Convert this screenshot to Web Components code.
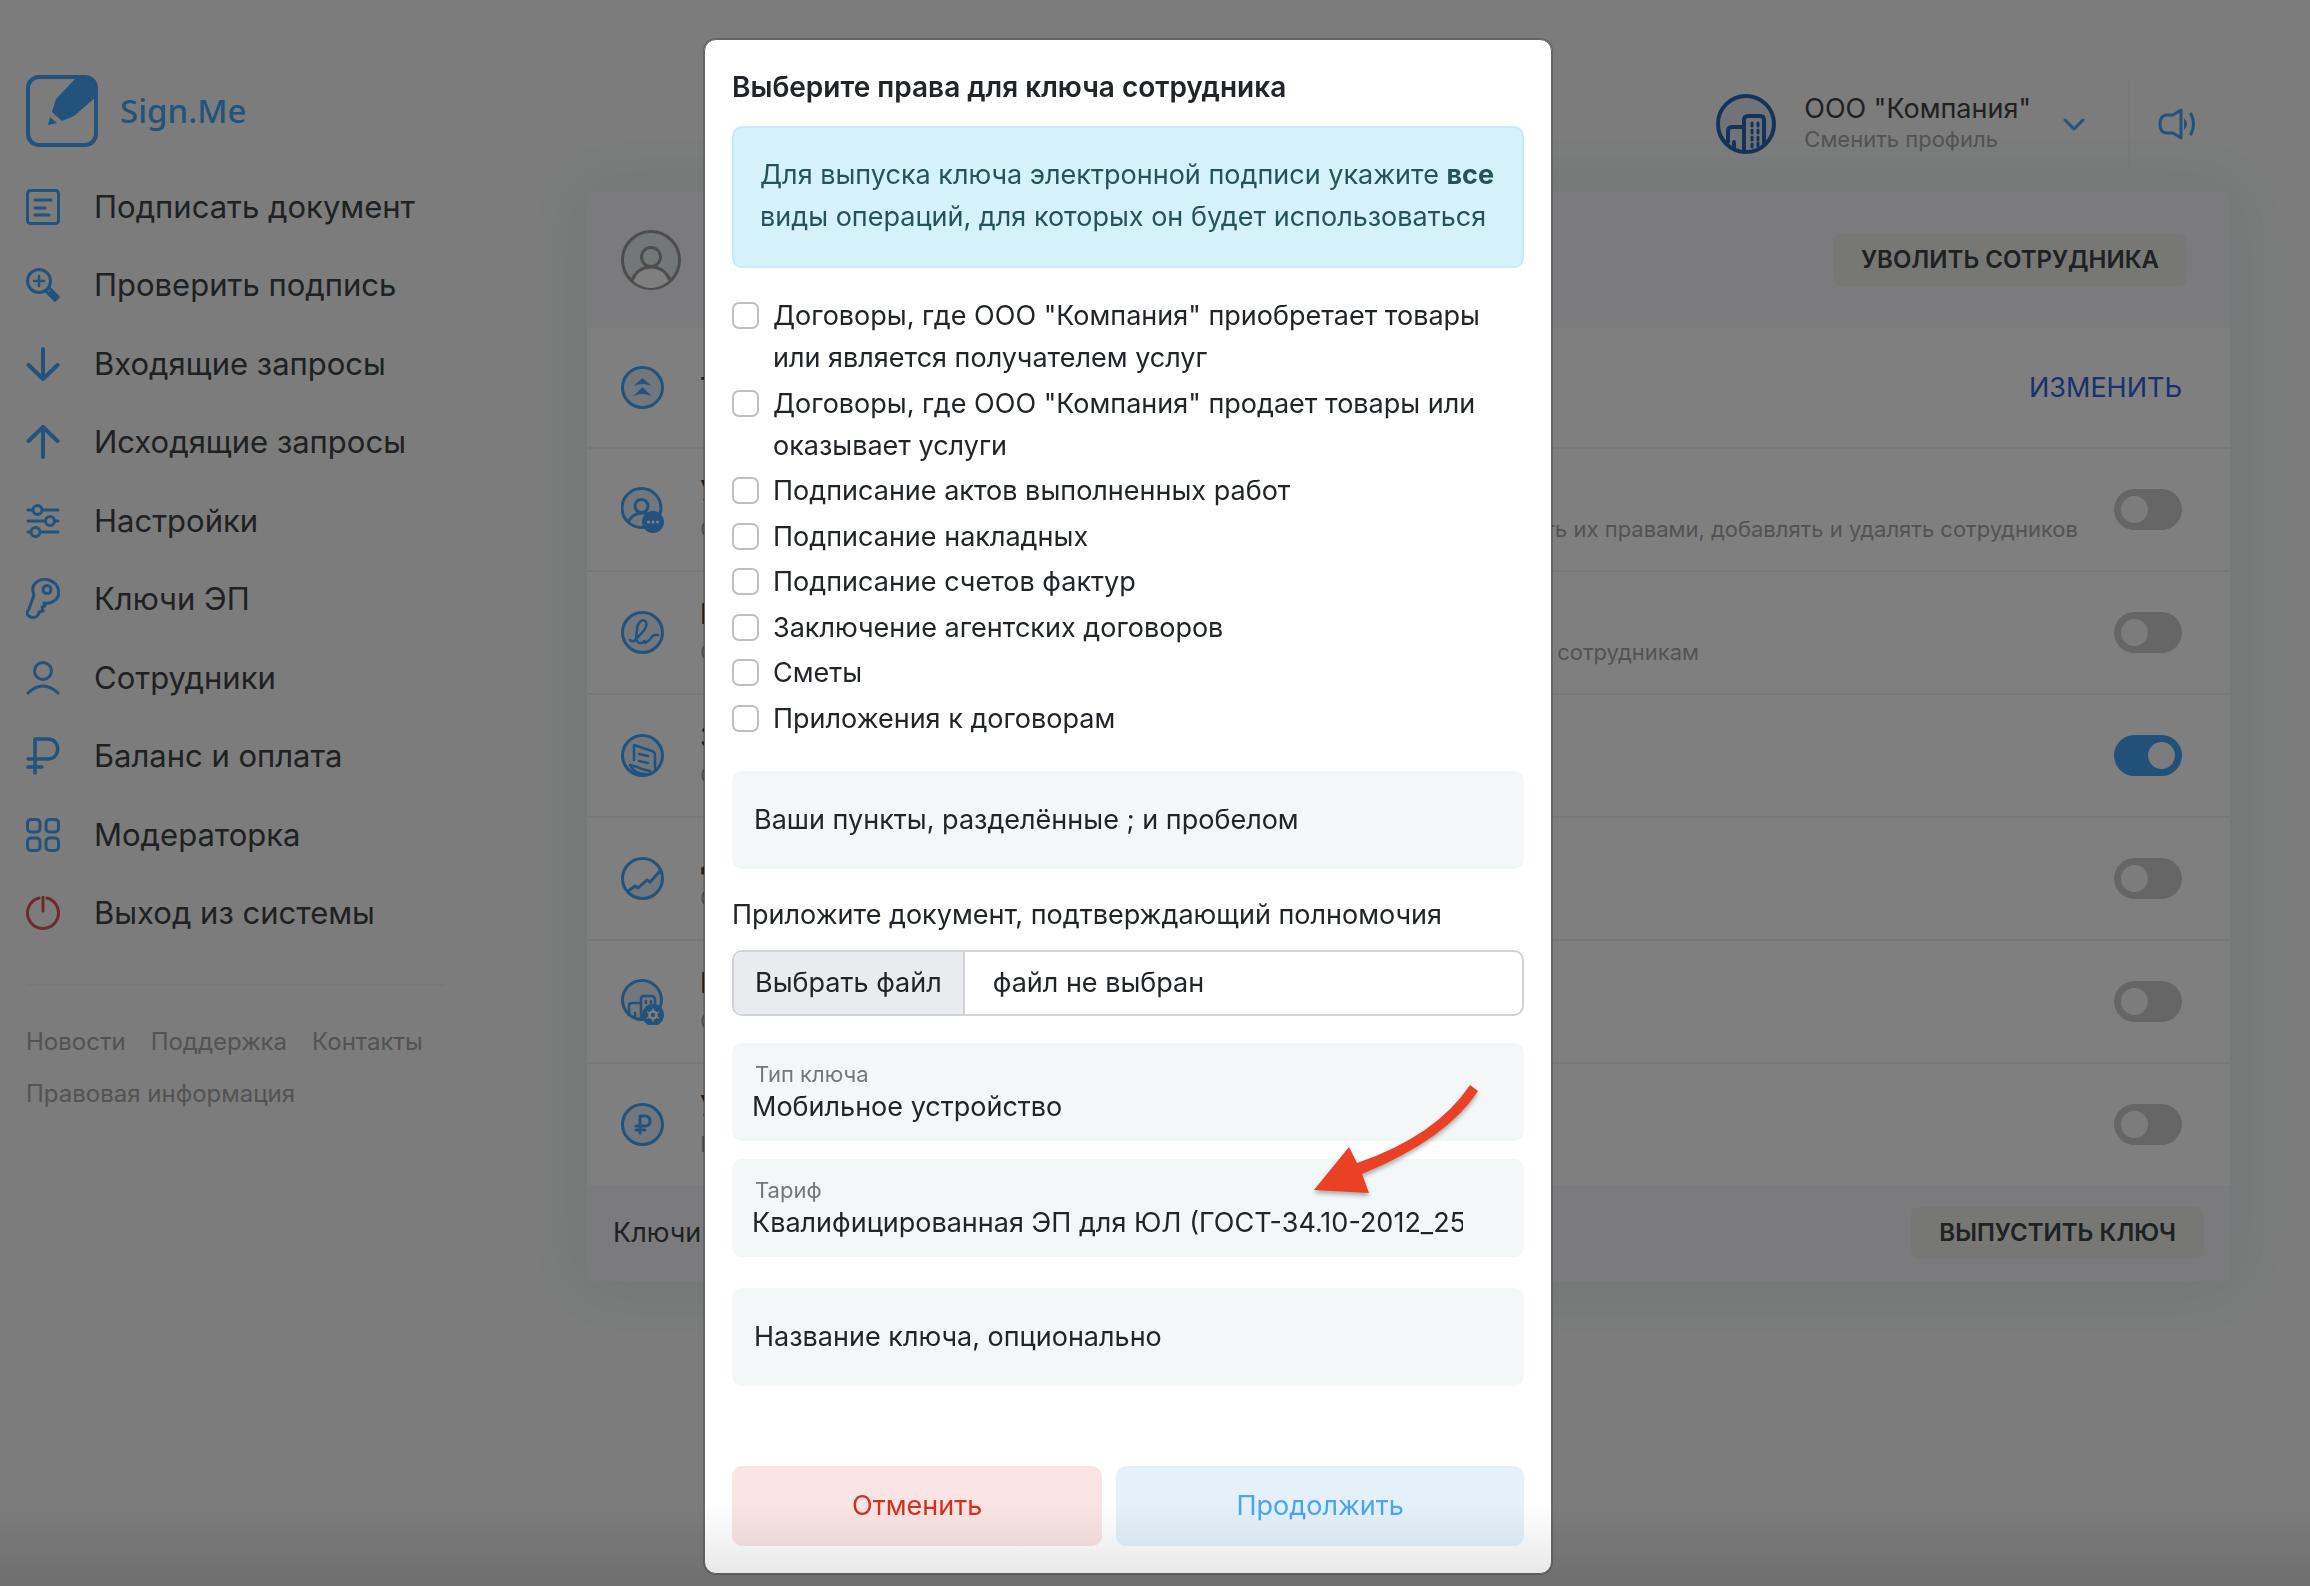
<!DOCTYPE html>
<html lang="ru">
<head>
<meta charset="utf-8">
<meta name="viewport" content="width=device-width, initial-scale=1">
<title>Sign.Me</title>
<style>
  :root {
    --ink: #404244;
    --muted: #a6a6a6;
    --blue: #46a4f8;
    --line: #f0f0f0;
    --title: 28px;
    --text: 27px;
    --small: 24px;
    --tiny: 22px;
    --line-height: 42px;
  }
  html, body { margin: 0; height: 100%; }
  body {
    background: #f6f9f7;
    color: var(--ink);
    font: 400 var(--text)/var(--line-height) Inter, "Liberation Sans", sans-serif;
  }
</style>
</head>
<body>
<app-shell>
  <side-bar slot="side">
    <nav-item icon="doc">Подписать документ</nav-item>
    <nav-item icon="search">Проверить подпись</nav-item>
    <nav-item icon="down">Входящие запросы</nav-item>
    <nav-item icon="up">Исходящие запросы</nav-item>
    <nav-item icon="sliders">Настройки</nav-item>
    <nav-item icon="key">Ключи ЭП</nav-item>
    <nav-item icon="person">Сотрудники</nav-item>
    <nav-item icon="ruble">Баланс и оплата</nav-item>
    <nav-item icon="grid">Модераторка</nav-item>
    <nav-item icon="power">Выход из системы</nav-item>
    <foot-link slot="links">Новости</foot-link>
    <foot-link slot="links">Поддержка</foot-link>
    <foot-link slot="links">Контакты</foot-link>
    <foot-link slot="links">Правовая информация</foot-link>
  </side-bar>

  <top-bar>
    <span slot="name">ООО "Компания"</span>
    <span slot="hint">Сменить профиль</span>
  </top-bar>

  <employee-card>
    <grey-button slot="head">УВОЛИТЬ СОТРУДНИКА</grey-button>
    <right-row icon="chevrons" action="ИЗМЕНИТЬ">Т</right-row>
    <right-row icon="manager" lead="С" tail="управлять их правами, добавлять и удалять сотрудников">У</right-row>
    <right-row class="short" icon="sign" lead="С" tail="сотрудникам">Р</right-row>
    <right-row icon="request" lead="С" on>З</right-row>
    <right-row icon="chart" lead="С">Д</right-row>
    <right-row icon="company" lead="С">Р</right-row>
    <right-row icon="coin" lead="Н">У</right-row>
    <span slot="foot">Ключи</span>
    <grey-button slot="foot">ВЫПУСТИТЬ КЛЮЧ</grey-button>
  </employee-card>
</app-shell>

<modal-dialog heading="Выберите права для ключа сотрудника">
  <info-note>Для выпуска ключа электронной подписи укажите <b>все</b> виды операций, для которых он будет использоваться</info-note>
  <check-list>
    <check-item>Договоры, где ООО "Компания" приобретает товары или является получателем услуг</check-item>
    <check-item>Договоры, где ООО "Компания" продает товары или оказывает услуги</check-item>
    <check-item>Подписание актов выполненных работ</check-item>
    <check-item>Подписание накладных</check-item>
    <check-item>Подписание счетов фактур</check-item>
    <check-item>Заключение агентских договоров</check-item>
    <check-item>Сметы</check-item>
    <check-item>Приложения к договорам</check-item>
  </check-list>
  <text-field>Ваши пункты, разделённые ; и пробелом</text-field>
  <file-field button="Выбрать файл" empty="файл не выбран">Приложите документ, подтверждающий полномочия</file-field>
  <select-field value="Мобильное устройство">Тип ключа</select-field>
  <select-field class="next" value="Квалифицированная ЭП для ЮЛ (ГОСТ-34.10-2012_256)">Тариф</select-field>
  <text-field class="last">Название ключа, опционально</text-field>
  <action-button slot="actions" class="cancel">Отменить</action-button>
  <action-button slot="actions" class="go">Продолжить</action-button>
</modal-dialog>

<script>
const define = (name, render) => customElements.define(name, class extends HTMLElement {
  connectedCallback() {
    if (this.shadowRoot) return;
    const root = this.attachShadow({ mode: 'open' });
    const tpl = document.createElement('template');
    tpl.innerHTML = '<style>*{box-sizing:border-box}:host{box-sizing:border-box}:host([hidden]){display:none}</style>' + render(this);
    root.append(tpl.content.cloneNode(true));
  }
});

/* Icons: stroke art, colour comes from currentColor */
const ICONS = {
  logo: [72, 72, '<rect x="2" y="2" width="68" height="68" rx="11" stroke-width="4"/><path fill="currentColor" stroke="none" d="M50 3h12q8 0 8 9v10L48 41l-12 5-10-9 4-13z"/><path stroke="none" fill="currentColor" d="M24 42l7 6-9 2z"/>'],
  doc: [34, 36, '<rect x="1.500" y="1.500" width="31" height="33" rx="3"/><path d="M9 11h16M9 19h10M9 26h14"/>'],
  search: [34, 34, '<circle cx="13" cy="13" r="11.500"/><path d="M13 8v10M8 13h10M21 22.500l2.500-2.500 9 9-3.500 3.500-9-9zM24 24l5 5" stroke-width="2.500"/>'],
  down: [34, 34, '<path d="M17 2v30M2.500 18L17 32l14.500-14" stroke-width="4"/>'],
  up: [34, 34, '<path d="M17 32V2M2.500 16L17 2l14.500 14" stroke-width="4"/>'],
  sliders: [34, 34, '<path d="M2 6h4M17 6h15M2 17h16M29 17h3M2 28h2M15 28h17"/><circle cx="11.500" cy="6" r="4.500"/><circle cx="24" cy="17" r="4.500"/><circle cx="9.500" cy="28" r="4.500"/>'],
  key: [34, 42, '<circle cx="21" cy="11.500" r="4"/><path d="M8 17C3 5 15-1 24 2.500c10 4 12 16 3 21-3 2-6 2-9 1.500l1 3-3 1 1 4-4 1-1 3c-2 3-6 3.500-9 1-3-2-2-4 0-7z"/>'],
  person: [34, 34, '<circle cx="17" cy="10" r="8.500"/><path d="M2 32q15-14 30 0"/>'],
  ruble: [34, 38, '<g stroke-width="3.500"><path d="M9 36V2h13c13 0 13 20 0 20H2M2 30h14"/></g>'],
  grid: [34, 34, '<rect x="1.500" y="1.500" width="12.500" height="12.500" rx="3.500"/><rect x="20" y="1.500" width="12.500" height="12.500" rx="3.500"/><rect x="1.500" y="20" width="12.500" height="12.500" rx="3.500"/><rect x="20" y="20" width="12.500" height="12.500" rx="3.500"/>'],
  power: [34, 34, '<path d="M13 2A15.500 15.500 0 1 0 21 2M17 1v14"/>'],
  user: [60, 60, '<circle cx="30" cy="30" r="28.500" fill="#e8eef0"/><path d="M11 50Q30 24 49 50Q30 66 11 50z" fill="#fff" stroke="none"/><circle cx="30" cy="27" r="9.500"/><path d="M11 50q6-13 19-13t19 13"/>'],
  building: [60, 60, '<circle cx="30" cy="30" r="28" stroke-width="4" fill="#e1e8f4"/><path d="M12 48V37q0-4 4-4h11M28 56V26q0-4 4-4h12q4 0 4 4v25M18 53v-5M28 58V34" stroke-width="4"/><path d="M36 29v3M42 29v3M36 36v3M42 36v3M36 43v3M42 43v3M36 50v3M42 49v3"/>'],
  chevrons: [43, 43, '<circle cx="21.500" cy="21.500" r="20" fill="#e3eefa"/><path fill="currentColor" stroke="none" d="M21.500 12l9 8q-9-4-18 0zM21.500 21l9 9q-9-4-18 0z"/>'],
  manager: [43, 46, '<circle cx="20.500" cy="21" r="19.500" fill="#e3eefa"/><circle cx="20.500" cy="19" r="6.500"/><path d="M7 35q5-9 14-9 5 0 8 3"/><circle cx="32" cy="35" r="9.500" fill="currentColor"/><path stroke="#fff" d="M27.500 35h.1M32 35h.1M36.500 35h.1"/>'],
  sign: [43, 43, '<circle cx="21.500" cy="21.500" r="20" fill="#e3eefa"/><path stroke-width="2.500" d="M9 29q3 3 6-1c7-7 12-12 10-17-3-5-9 1-9 8-1 6-2 13 3 13 3 1 5-5 5 0q5-3 6-5 2-4 7-3"/>'],
  request: [43, 43, '<circle cx="21.500" cy="21.500" r="20" fill="#e3eefa"/><path stroke-width="2.500" d="M13 26V11l18 6q3 1 3 4v13M18 20l9 2M18 27l9 2M9 31q8 2 12 4l8 2M9 31q4 9 16 9"/>'],
  chart: [43, 43, '<path fill="#e3eefa" stroke="none" d="M7 34l7-4 3 2 9-9 3 2L39 14Q44 28 34 37 18 46 7 34z"/><circle cx="21.500" cy="21.500" r="20"/><path d="M7 34l7-5 3 2 9-8 3 2L39 14"/>'],
  company: [43, 46, '<circle cx="21" cy="21" r="19.500" fill="#e3eefa"/><path stroke-width="2.500" d="M8 36V27q0-3 3-3h7M20 39V20q0-3 3-3h7q4 0 4 4v5M14 38v-4M25 22v2M30 22v2"/><circle cx="32" cy="36" r="9.500" fill="currentColor"/><circle cx="32" cy="36" r="3.500" stroke="#fff" stroke-width="2.500"/><path stroke="#fff" stroke-width="1.500" d="M32 30v1.500M32 40.500V42M26.500 33l1.500 1M36 38l1.500 1M26.500 39l1.500-1M36 34l1.500-1"/>'],
  coin: [43, 43, '<circle cx="21.500" cy="21.500" r="20" fill="#e3eefa"/><path d="M19 30V13h5q5 0 5 5t-5 5h-9M15 27h9"/>'],
  chevron: [22, 14, '<path d="M2 3l9 9 9-9"/>'],
  horn: [38, 32, '<path d="M23 2v28l-8-5H9Q2 25 2 16t7-9h6zM33 6q5 10 0 20"/><path fill="currentColor" stroke="none" d="M26 10q6 6 0 12z"/>']
};
define('app-icon', el => {
  const [w, h, art] = ICONS[el.getAttribute('name')];
  return `<style>:host{display:block;flex:none}svg{display:block}</style>
  <svg aria-hidden="true" width="${w}" height="${h}" viewBox="0 0 ${w} ${h}" fill="none" stroke="currentColor" stroke-width="3" stroke-linecap="round" stroke-linejoin="round">${art}</svg>`;
});

define('app-shell', () => `<style>
  :host{display:grid;grid-template-columns:418px minmax(0,1fr);gap:143px;padding:0 80px 0 26px}
  main{display:flex;flex-direction:column}
</style><slot name="side"></slot><main><slot></slot></main>`);

define('side-bar', () => `<style>
  :host{display:block;padding-top:75px}
  .brand{display:flex;align-items:center;gap:22px;color:var(--blue);text-decoration:none;font:500 33px/70px "Noto Sans","Open Sans",sans-serif}
  nav{padding:21px 0 31px;border-bottom:2px solid var(--line)}
  footer{display:flex;flex-wrap:wrap;gap:9px 25px;padding-top:34px}
</style>
<a class="brand" href="#"><app-icon name="logo"></app-icon><span>Sign.Me</span></a>
<nav><slot></slot></nav><footer><slot name="links"></slot></footer>`);

define('nav-item', el => `<style>
  :host{display:block;padding:15px 0}
  :host(:nth-of-type(even)){padding-bottom:16px}
  a{display:flex;align-items:center;color:inherit;text-decoration:none;font-size:31px;line-height:48px;height:48px;gap:34px}
  app-icon{color:${el.getAttribute('icon') === 'power' ? '#e0525a' : 'var(--blue)'}}
</style><a href="#"><app-icon name="${el.getAttribute('icon')}"></app-icon><span><slot></slot></span></a>`);

define('foot-link', () => `<style>
  :host{display:block}
  a{color:var(--muted);text-decoration:none;font-size:var(--small);line-height:var(--line-height)}
</style><a href="#"><slot></slot></a>`);

define('top-bar', () => `<style>
  :host{display:flex;justify-content:flex-end;align-items:center;height:88px;margin:80px 34px 24px 0}
  button{display:flex;align-items:center;gap:28px;border:0;padding:0 43px 0 0;background:none;font:inherit;color:inherit;text-align:left}
  .face{color:#2b67b3}
  span{display:grid}
  button>span{padding-bottom:4px}
  .name{line-height:34px}
  .hint{font-size:var(--tiny);line-height:26px;color:var(--muted)}
  .arrow,.horn{color:var(--blue)}
  .arrow{margin-left:4px}
  .side{border:0;border-left:2px solid var(--line);border-radius:0;height:88px;padding:0 0 0 28px}
</style>
<button type="button"><app-icon class="face" name="building"></app-icon>
<span><span class="name"><slot name="name"></slot></span><span class="hint"><slot name="hint"></slot></span></span>
<app-icon class="arrow" name="chevron"></app-icon></button>
<button class="side" type="button" aria-label="Новости"><app-icon class="horn" name="horn"></app-icon></button>`);

define('grey-button', () => `<style>
  :host{display:block}
  button{display:block;border:0;border-radius:8px;background:#eeeeed;color:inherit;font:600 var(--small)/52px Inter,"Liberation Sans",sans-serif;padding:0 28px}
</style><button type="button"><slot></slot></button>`);

define('employee-card', () => `<style>
  :host{display:block;background:#fff;border-radius:8px;box-shadow:0 0 60px rgba(70,110,160,.1)}
  header,footer{display:flex;align-items:center;justify-content:space-between;background:#f6f6fa}
  header{height:136px;padding:0 43px 0 34px;border-radius:8px 8px 0 0}
  header app-icon{color:#9a9a9a}
  footer{height:96px;padding:0 26px;border-radius:0 0 8px 8px}
</style>
<header><app-icon name="user"></app-icon><slot name="head"></slot></header>
<slot></slot>
<footer><slot name="foot"></slot></footer>`);

define('right-row', el => {
  const a = n => el.getAttribute(n) || '';
  const control = a('action')
    ? `<a href="#">${a('action')}</a>`
    : `<input type="checkbox" role="switch" aria-labelledby="t"${el.hasAttribute('on') ? ' checked' : ''}>`;
  return `<style>
  :host{display:flex;align-items:center;height:123px;padding:0 48px 0 34px;border-top:2px solid var(--line)}
  :host(:first-of-type){height:119px;border-top:0}
  app-icon{color:var(--blue);width:43px;margin-right:36px}
  .body{flex:1;min-width:0;padding-right:36px}
  #t{font-size:var(--title);font-weight:500;line-height:38px}
  .sub{display:flex;justify-content:space-between;font-size:var(--tiny);line-height:38px;color:var(--muted)}
  :host(.short) .sub{padding-right:379px}
  a{color:#2f62dc;text-decoration:none}
  input{appearance:none;margin:0;width:68px;height:41px;border-radius:21px;background:#ccc;display:flex;align-items:center;padding:0 7px}
  input::before{content:"";width:27px;height:27px;border-radius:50%;background:#f8f8f8}
  input:checked{background:#42a0f0;justify-content:flex-end}
  </style><app-icon name="${a('icon')}"></app-icon>
  <div class="body"><div id="t"><slot></slot></div>${a('lead') ? `<div class="sub"><span>${a('lead')}</span><span>${a('tail')}</span></div>` : ''}</div>${control}`;
});

define('modal-dialog', el => `<style>
  :host{position:fixed;inset:0;display:flex;justify-content:center;align-items:flex-start;padding:39px 54px 0 0;background:rgba(0,0,0,.5);color:#212529}
  :host::after{content:"";position:absolute;inset:auto 0 0 0;height:84px;background:linear-gradient(transparent,rgba(0,0,0,.1));pointer-events:none}
  section{position:relative;width:848px;padding:26px 27px 27px;background:#fff;border:1px solid #666;border-radius:12px;box-shadow:0 0 0 1px rgba(0,0,0,.2)}
  h2{margin:0 0 18px;font-size:var(--title);line-height:var(--line-height);font-weight:600}
  .actions{display:flex;gap:14px;margin-top:80px}
  .pointer{position:absolute;left:595px;top:1030px;filter:drop-shadow(0 3px 2px rgba(0,0,0,.3))}
</style>
<section role="dialog" aria-modal="true" aria-labelledby="h"><h2 id="h">${el.getAttribute('heading')}</h2>
<slot></slot><div class="actions"><slot name="actions"></slot></div>
<svg class="pointer" aria-hidden="true" width="190" height="135" viewBox="0 0 190 135"><path fill="#ea4025" d="M170 15Q136 66 57 93L49 77 14 120 69 123 62 104Q147 69 178 21Z"/></svg></section>`);

define('info-note', () => `<style>
  :host{display:block;padding:26px 26px 28px;background:#d5f2fb;border:2px solid #c2edf9;border-radius:10px;color:#26525c}
</style><slot></slot>`);

define('check-list', () => `<style>
  :host{display:block;margin:27px 0 31px}
</style><slot></slot>`);

define('check-item', () => `<style>
  :host{display:block;margin-bottom:3px}
  :host(:nth-of-type(odd)){margin-bottom:4px}
  label{display:flex;gap:14px}
  input{appearance:none;flex:none;width:27px;height:27px;margin:7px 0 0;border:2px solid #bfbfbf;border-radius:7px;background:#fff}
</style><label><input type="checkbox"><span><slot></slot></span></label>`);

define('text-field', () => `<style>
  :host{display:block}
  :host(.last){margin-top:31px}
  label{display:grid;align-items:center}
  input,span{grid-area:1/1}
  input{width:100%;height:98px;border:0;border-radius:10px;background:#f4f7f8;padding:0 22px;font:inherit;color:inherit}
  span{padding:0 22px;pointer-events:none}
</style><label><input type="text"><span><slot></slot></span></label>`);

define('file-field', el => `<style>
  :host{display:block;margin:25px 0 27px}
  .title{display:block;margin-bottom:14px}
  .box{display:flex;border:2px solid #d0d3d6;border-radius:10px;overflow:hidden;line-height:62px;position:relative}
  .pick{background:#e9ebef;border-right:2px solid #d0d3d6;padding:0 21px}
  .none{padding:0 28px}
  input{position:absolute;inset:0;width:100%;opacity:0}
</style><label class="title" for="f"><slot></slot></label>
<div class="box"><span class="pick">${el.getAttribute('button')}</span><span class="none">${el.getAttribute('empty')}</span><input id="f" type="file"></div>`);

define('select-field', el => `<style>
  :host{display:block;background:#f4f7f8;border-radius:10px;padding:16px 61px 16px 20px}
  :host(.next){margin-top:18px}
  label{display:block;padding-left:3px;font-size:var(--tiny);line-height:30px;color:#72777a}
  select{display:block;appearance:none;width:100%;height:36px;border:0;padding:0;background:none;font:inherit;line-height:36px;color:inherit}
</style><label for="s"><slot></slot></label><select id="s"><option>${el.getAttribute('value')}</option></select>`);

define('action-button', () => `<style>
  :host{display:block;flex:auto}
  button{width:100%;border:0;border-radius:10px;padding:0;font:inherit;line-height:80px;background:#e4f1fb;color:#4ca5f3}
  :host(.cancel) button{background:#fae4e4;color:#d3301f}
</style><button type="button"><slot></slot></button>`);
</script>
</body>
</html>
